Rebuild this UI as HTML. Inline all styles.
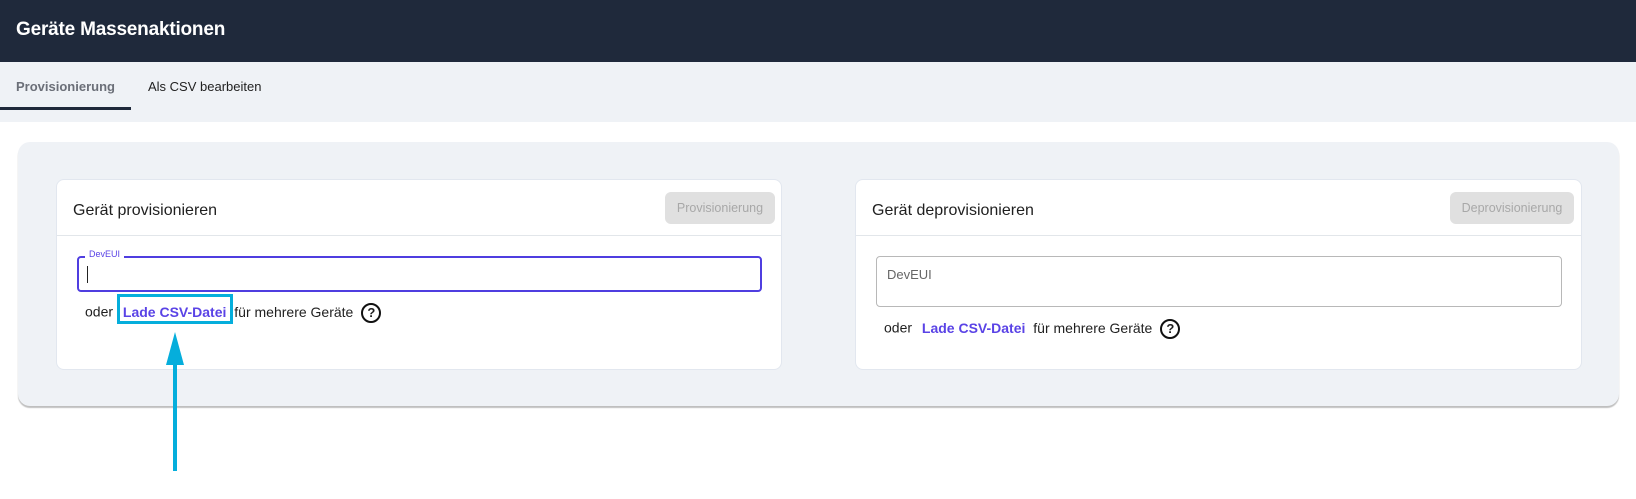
<!DOCTYPE html>
<html><head><meta charset="utf-8"><style>
*{box-sizing:border-box;margin:0;padding:0}
body{width:1636px;height:499px;background:#fff;font-family:"Liberation Sans",sans-serif;position:relative;overflow:hidden;color:#1f1f1f}
.abs{position:absolute}
.hdr{left:0;top:0;width:1636px;height:62px;background:#1f293b;color:#fff;font-size:19px;font-weight:bold;padding:19px 0 0 16px;letter-spacing:-0.2px}
.tabs{left:0;top:62px;width:1636px;height:60px;background:#eff2f6}
.panel{left:18px;top:142px;width:1601px;height:264px;background:#eff2f6;border-radius:12px;box-shadow:0 2px 1px rgba(0,0,0,.25)}
.card{background:#fff;border:1px solid #e2e7ef;border-radius:8px;top:179px;height:191px}
.ct{font-size:16px;top:22px;position:absolute}
.div{position:absolute;left:0;right:0;top:55px;border-top:1px solid #e2e6ea}
.btn{position:absolute;top:12px;height:32px;background:#e0e0e0;border-radius:6px;color:#a8a8a8;font-size:12.5px;text-align:center;line-height:32px}
.line{position:absolute;font-size:14px;white-space:nowrap}
.lnk{color:#5a43e6;font-weight:bold}
.q{display:inline-block;width:20px;height:20px;border:2px solid #111;border-radius:50%;text-align:center;font-size:13px;font-weight:bold;line-height:16px;vertical-align:middle;margin-left:8px}
</style></head><body>
<div class="abs hdr">Geräte Massenaktionen</div>
<div class="abs tabs">
 <div class="abs" style="left:16px;top:17px;font-size:13px;font-weight:bold;color:#6b6f78">Provisionierung</div>
 <div class="abs" style="left:148px;top:17px;font-size:13px;color:#222">Als CSV bearbeiten</div>
 <div class="abs" style="left:0;top:45px;width:131px;height:3px;background:#1f293b"></div>
</div>
<div class="abs panel"></div>
<div class="abs card" style="left:56px;width:726px">
 <div class="ct" style="left:16px">Gerät provisionieren</div>
 <div class="btn" style="left:608px;width:110px">Provisionierung</div>
 <div class="div"></div>
 <div class="abs" style="left:20px;top:76px;width:685px;height:36px;border:2px solid #4f3ee0;border-radius:4px"></div>
 <div class="abs" style="left:28px;top:69px;background:#fff;padding:0 4px;font-size:9px;color:#5a43e6">DevEUI</div>
 <div class="abs" style="left:30px;top:86px;width:1px;height:17px;background:#222"></div>
 <div class="line" style="left:28px;top:123px">oder <span class="lnk" style="margin-left:6px">Lade CSV-Datei</span> <span style="margin-left:4px">für mehrere Geräte</span><span class="q">?</span></div>
 <div class="abs" style="left:60px;top:114px;width:116px;height:30px;border:3px solid #05aedc"></div>
</div>
<div class="abs card" style="left:855px;width:727px">
 <div class="ct" style="left:16px">Gerät deprovisionieren</div>
 <div class="btn" style="left:594px;width:124px">Deprovisionierung</div>
 <div class="div"></div>
 <div class="abs" style="left:20px;top:76px;width:686px;height:51px;border:1px solid #b8b8b8;border-radius:4px;padding:10px 10px;font-size:13px;color:#666">DevEUI</div>
 <div class="line" style="left:28px;top:139px">oder <span class="lnk" style="margin-left:6px">Lade CSV-Datei</span> <span style="margin-left:4px">für mehrere Geräte</span><span class="q">?</span></div>
</div>
<svg class="abs" style="left:160px;top:330px" width="30" height="145"><polygon points="15,2 6,35 24,35" fill="#05aedc"/><rect x="13" y="30" width="4" height="111" fill="#05aedc"/></svg>
</body></html>
